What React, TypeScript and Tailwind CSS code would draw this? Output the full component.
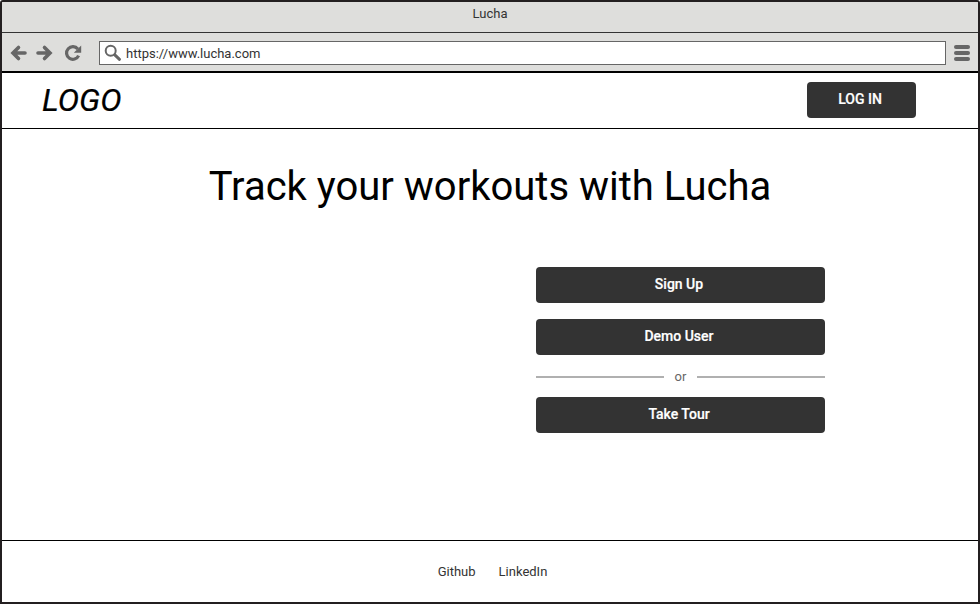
import type { ReactNode } from "react";

function ActionButton({ children }: { children: ReactNode }) {
  return (
    <button className="flex h-9 w-full items-center justify-center rounded-[4px] bg-[#333333] pr-[3px] pb-[2px] text-[14px] leading-4 font-medium text-white [-webkit-text-stroke:0.2px_white]">
      {children}
    </button>
  );
}

function BrowserChrome() {
  return (
    <div className="shrink-0 bg-[#dededc]">
      <div className="flex h-[31px] justify-center border-b border-[#333333] pt-1 text-[13px] leading-4 text-[#333333]">
        Lucha
      </div>
      <div className="flex h-[40px] items-center border-b-2 border-black pt-[2px]">
        <svg className="ml-[8px] h-[18px] w-[18px]" viewBox="0 0 18 18" fill="none" stroke="#666666" strokeWidth="3.6" strokeLinecap="round">
          <path d="M4 9H15M8.5 3.5L3 9L8.5 14.5" />
        </svg>
        <svg className="ml-[7px] h-[18px] w-[18px]" viewBox="0 0 18 18" fill="none" stroke="#666666" strokeWidth="3.6" strokeLinecap="round">
          <path d="M3 9H14M9.5 3.5L15 9L9.5 14.5" />
        </svg>
        <svg className="ml-[11px] h-[18px] w-[18px]" viewBox="0 0 18 18" fill="none">
          <path d="M13.8 5.1A6.3 6.3 0 1 0 14.6 11.6" stroke="#666666" strokeWidth="3.2" />
          <path d="M17.2 1.5V8.8H9.8Z" fill="#666666" />
        </svg>
        <div className="ml-[17px] flex h-6 w-[847px] items-center border border-[#666666] bg-white">
          <svg className="ml-[4px] h-[18px] w-[18px]" viewBox="0 0 18 18" fill="none" stroke="#666666">
            <circle cx="6.7" cy="6.7" r="5" strokeWidth="2" />
            <path d="M10.8 10.8L15.5 15.3" strokeWidth="3" strokeLinecap="round" />
          </svg>
          <span className="ml-1 pt-[2px] text-[13px] leading-4 text-[#333333]">https://www.lucha.com</span>
        </div>
        <div className="ml-2 flex w-4 flex-col gap-[2px]">
          <span className="h-1 rounded-full bg-[#666666]" />
          <span className="h-1 rounded-full bg-[#666666]" />
          <span className="h-1 rounded-full bg-[#666666]" />
        </div>
      </div>
    </div>
  );
}

export default function App() {
  return (
    <div className="h-[604px] w-[980px] bg-white font-[Roboto,sans-serif]">
      <div className="flex h-full flex-col overflow-hidden rounded-t-[3px] border-2 border-[#231f20] bg-white">
        <BrowserChrome />
        <header className="flex h-[56px] shrink-0 items-center justify-between border-b border-black pr-[62px] pb-[2px] pl-10">
          <span className="text-[32px] leading-9 text-black italic [-webkit-text-stroke:0.2px_black]">LOGO</span>
          <div className="w-[109px]">
            <ActionButton>LOG IN</ActionButton>
          </div>
        </header>
        <main className="flex flex-1 flex-col">
          <h1 className="mt-[33px] text-center text-[40px] leading-[50px] text-black">Track your workouts with Lucha</h1>
          <div className="mt-[55px] ml-[534px] flex w-[289px] flex-col">
            <ActionButton>Sign Up</ActionButton>
            <div className="h-4" />
            <ActionButton>Demo User</ActionButton>
            <div className="flex h-[42px] items-center">
              <span className="mt-[2px] h-[2px] w-32 bg-[#b0b0b0]" />
              <span className="flex-1 pt-[2px] text-center text-[13px] leading-4 text-[#666666]">or</span>
              <span className="mt-[2px] h-[2px] w-32 bg-[#b0b0b0]" />
            </div>
            <ActionButton>Take Tour</ActionButton>
          </div>
        </main>
        <footer className="flex h-[62px] shrink-0 items-center justify-center gap-[23px] border-t border-black pl-[5px] text-[13px] leading-4 text-[#333333]">
          <a>Github</a>
          <a>LinkedIn</a>
        </footer>
      </div>
    </div>
  );
}
